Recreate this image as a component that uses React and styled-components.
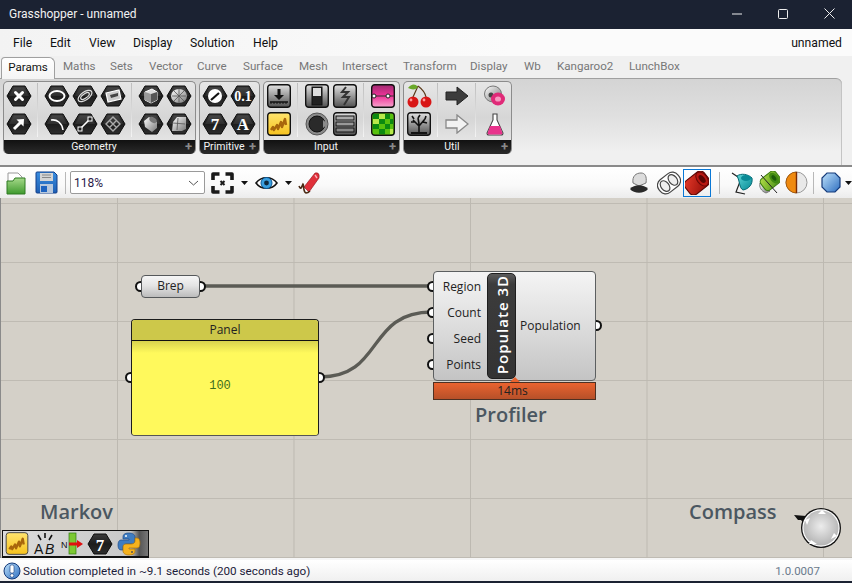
import React from 'react'
import styled, { createGlobalStyle } from 'styled-components'

const GlobalStyle = createGlobalStyle`
  html, body { margin: 0; padding: 0; background: #f0f0f0; }
  body { font-family: Roboto, "Open Sans", sans-serif; }
`

const Window = styled.div`
  width: 852px;
  height: 583px;
  display: flex;
  flex-direction: column;
  overflow: hidden;
  background: #f0f0f0;
  border-bottom: 2px solid #1b2232;
  box-sizing: border-box;
`

const TitleBar = styled.div`
  height: 29px;
  flex: none;
  display: flex;
  align-items: center;
  background: #1b2232;
  color: #f2f2f2;
  font-size: 12px;
  padding-left: 9px;
  padding-bottom: 1px;
  box-sizing: border-box;
`

const TitleText = styled.span`
  flex: 1;
`

const WinButton = styled.span`
  width: 46px;
  height: 20px;
  display: flex;
  align-items: center;
  justify-content: center;
  margin-bottom: 1px;
`

const MenuBar = styled.div`
  height: 27px;
  flex: none;
  display: flex;
  align-items: center;
  background: linear-gradient(90deg, #f3f3f3, #fbfbfb 60%);
  font-size: 12.2px;
  color: #111;
  padding: 0 10px 0 13px;
`

const MenuItem = styled.span`
  width: ${p => p.$w}px;
`

const DocName = styled.span`
  margin-left: auto;
`

const TabRow = styled.div`
  height: 22px;
  flex: none;
  display: flex;
  align-items: flex-end;
  padding-left: 1px;
  font-size: 11.6px;
  color: #777;
`

const ActiveTab = styled.div`
  width: 54px;
  height: 22px;
  margin-right: 8px;
  box-sizing: border-box;
  border: 1px solid #a0a0a0;
  border-bottom: none;
  border-radius: 4px 6px 0 0;
  background: linear-gradient(#fff, #f4f4f4);
  color: #111;
  text-align: center;
  line-height: 19px;
  position: relative;
  z-index: 1;
  margin-bottom: -1px;
`

const Tab = styled.span`
  width: ${p => p.$w}px;
  line-height: 23px;
  flex: none;
`

const RibbonStrip = styled.div`
  height: 87px;
  flex: none;
  margin-right: 10px;
  box-sizing: border-box;
  padding: 2px 0 0 3px;
  display: flex;
  align-items: flex-start;
  gap: 3px;
  border-top: 1px solid #a0a0a0;
  border-top-right-radius: 6px;
  box-shadow: inset -1px 0 0 #c4c4c4;
  background: linear-gradient(#d4d4d4, #e0e0e0 45%, #f0f0f0 85%);
`

const Group = styled.div`
  width: ${p => p.$w}px;
  height: 73px;
  box-sizing: border-box;
  border: 1px solid #8c8c8c;
  border-bottom: none;
  border-radius: 5px;
  display: flex;
  flex-direction: column;
  overflow: hidden;
  background: linear-gradient(#e6e6e6, #d6d6d6 50%, #ececec);
`

const GroupBody = styled.div`
  flex: 1;
  display: flex;
  padding: 0 0 0 1px;
`

const Column = styled.div`
  display: grid;
  grid-template-columns: repeat(${p => p.$n}, 28px);
  grid-auto-rows: 28px;
`

const Divider = styled.span`
  width: 1px;
  height: 54px;
  margin: 1px 5px 0 4px;
  background: linear-gradient(#bdbdbd, #f4f4f4);
`

const GroupFooter = styled.div`
  height: 14px;
  flex: none;
  position: relative;
  padding-right: 11px;
  background: linear-gradient(#111, #2b2b2b);
  color: #f4f4f4;
  font-size: 10.5px;
  line-height: 13px;
  text-align: center;
`

const Plus = styled.span`
  position: absolute;
  right: 3px;
  top: 0;
  color: #8a8a8a;
  font-weight: 700;
  font-size: 13px;
  line-height: 13px;
`

const Cell = styled.span`
  width: 28px;
  height: 28px;
  display: flex;
  align-items: center;
  justify-content: center;
`

const Toolbar = styled.div`
  height: 33px;
  flex: none;
  box-sizing: border-box;
  border-top: 2px solid #8a8a8a;
  display: flex;
  align-items: center;
  padding-left: 6px;
  background: linear-gradient(#fff, #f9f9f9 60%, #ececec);
`

const Slot = styled.span`
  display: flex;
  align-items: center;
  margin-left: ${p => p.$l || 0}px;
`

const PushRight = styled(Slot)`
  margin-left: auto;
`

const ToolSep = styled.span`
  width: 1px;
  height: 22px;
  margin-left: ${p => p.$l}px;
  background: #b8b8b8;
`

const Combo = styled.div`
  width: 135px;
  height: 23px;
  margin-left: 4px;
  box-sizing: border-box;
  border: 1px solid #9a9a9a;
  border-radius: 2px;
  background: #fff;
  display: flex;
  align-items: center;
  justify-content: space-between;
  padding: 0 5px 0 3px;
  font-size: 12px;
  color: #2a1a4a;
`

const SelectedTool = styled.span`
  width: 28px;
  height: 28px;
  margin-left: 2px;
  box-sizing: border-box;
  border: 1px solid #0a78d6;
  display: flex;
  align-items: center;
  justify-content: center;
`

const Canvas = styled.div`
  position: relative;
  z-index: 0;
  flex: 1;
  border-left: 1px solid #8a8a8a;
  background-color: #d4d0c8;
  background-image:
    linear-gradient(to right, #bdb9b1 1px, transparent 1px),
    linear-gradient(to bottom, #bfbbb3 1px, transparent 1px);
  background-size: 176.5px 100%, 100% 59px;
  background-position: 116px 0, 0 5px;
  font-family: "Open Sans", "Noto Sans", sans-serif;
`

const Wires = styled.svg`
  position: absolute;
  left: -1px;
  top: 0;
  z-index: -2;
`

const Node = styled.div`
  position: absolute;
  left: ${p => p.$x - 1}px;
  top: ${p => p.$y - 198}px;
  width: ${p => p.$w}px;
  height: ${p => p.$h}px;
  box-sizing: border-box;
`

const Grip = styled.span`
  position: absolute;
  z-index: -1;
  top: ${p => p.$y}px;
  ${p => (p.$out ? 'right: -7px;' : 'left: -7px;')}
  width: 11px;
  height: 11px;
  box-sizing: border-box;
  margin-top: -5.5px;
  border: 2.5px solid #111;
  border-radius: 50%;
  background: #fff;
`

const BrepBody = styled(Node)`
  border: 1px solid #55585a;
  border-radius: 4px;
  background: linear-gradient(#f6f6f6, #e4e4e4 45%, #bcbcbc);
  color: #222;
  font-size: 12px;
  line-height: 20px;
  text-align: center;
`

const PanelBody = styled(Node)`
  border: 1px solid #1c1c1c;
  border-radius: 4px;
  border-bottom-color: #555;
  background: #fff95c;
  display: flex;
  flex-direction: column;
  box-shadow: inset 0 0 0 1px #fffbb0;
`

const PanelHead = styled.div`
  height: 20px;
  flex: none;
  border-bottom: 1px solid #111;
  background: #cdc84a;
  color: #222;
  font-size: 12px;
  line-height: 19px;
  text-align: center;
  border-radius: 3px 3px 0 0;
`

const PanelText = styled.div`
  flex: 1;
  display: flex;
  align-items: center;
  justify-content: center;
  padding: 0 10px 4px 0;
  background: linear-gradient(#d8d34e, #fff95c 12px);
  color: #3e6d1c;
  font-family: "Liberation Mono", "DejaVu Sans Mono", monospace;
  font-size: 12px;
  border-radius: 0 0 3px 3px;
`

const CompBody = styled(Node)`
  border: 1px solid #5c5f60;
  border-radius: 4px;
  background: linear-gradient(#f4f4f4, #e2e2e2 40%, #c4c4c4);
  display: flex;
  color: #222;
  font-size: 12px;
`

const InputList = styled.div`
  width: 53px;
  flex: none;
  padding: 2px 6px 0 0;
  box-sizing: border-box;
`

const PortLabel = styled.div`
  height: 26px;
  line-height: 26px;
  text-align: right;
`

const Capsule = styled.div`
  width: 29px;
  height: 106px;
  flex: none;
  margin-top: 1px;
  box-sizing: border-box;
  border: 1px solid #1e1e1e;
  border-radius: 5px;
  background: linear-gradient(#5c5c5c, #3c3c3c 10px, #333);
  color: #fff;
  display: flex;
  align-items: center;
  justify-content: center;
`

const CapsuleText = styled.span`
  writing-mode: vertical-rl;
  transform: rotate(180deg);
  font-size: 15px;
  font-weight: 600;
  letter-spacing: 1px;
  white-space: nowrap;
  margin-bottom: 2px;
`

const OutputLabel = styled.div`
  flex: 1;
  padding: 0 0 0 4px;
  line-height: 108px;
`

const ProfileBar = styled(Node)`
  border: 1px solid #4e3022;
  background: linear-gradient(#ea632f, #b65029);
  color: #222;
  font-size: 12px;
  line-height: 16px;
  text-align: center;
  padding-right: 4px;
  &::before {
    content: '';
    position: absolute;
    left: 76px;
    top: -6px;
    border: 5px solid transparent;
    border-top: 0;
    border-bottom: 5px solid #e8622e;
  }
`

const CanvasLabel = styled.span`
  position: absolute;
  left: ${p => p.$x - 1}px;
  top: ${p => p.$y - 198}px;
  font-size: 20px;
  font-weight: 600;
  line-height: 24px;
  color: #4b5761;
  white-space: nowrap;
`

const Widget = styled.div`
  position: absolute;
  left: 1px;
  bottom: 0;
  width: 147px;
  height: 28px;
  box-sizing: border-box;
  border: 1px solid #111;
  border-bottom: 2px solid #111;
  display: flex;
  align-items: center;
  padding-left: 2px;
  gap: 4px;
  background: linear-gradient(90deg, #dcdcdc, #c8c8c8 88%, #555 94%, #777);
`

const CompassWrap = styled.svg`
  position: absolute;
  left: 786px;
  top: 302px;
`

const StatusBar = styled.div`
  height: 23px;
  flex: none;
  box-sizing: border-box;
  border-top: 2px solid #f6f6f6;
  display: flex;
  align-items: center;
  padding: 0 0 0 3px;
  gap: 2px;
  background: linear-gradient(#fff, #f0f0f0);
  font-size: 11.7px;
  color: #1c1c3a;
`

const Version = styled.span`
  margin-left: auto;
  margin-right: 32px;
  font-size: 11.5px;
  color: #6a7a8c;
`

const Defs = () => (
  <svg width='0' height='0' style={{ position: 'absolute' }}>
    <defs>
      <linearGradient id='hexFill' x1='0' y1='0' x2='0' y2='1'>
        <stop offset='0' stopColor='#3a3a3a' />
        <stop offset='0.5' stopColor='#1c1c1c' />
        <stop offset='1' stopColor='#2e2e2e' />
      </linearGradient>
      <linearGradient id='grayShade' x1='0' y1='0' x2='1' y2='1'>
        <stop offset='0' stopColor='#fff' />
        <stop offset='1' stopColor='#777' />
      </linearGradient>
      <linearGradient id='darkBtn' x1='0' y1='0' x2='0' y2='1'>
        <stop offset='0' stopColor='#e2e2e2' />
        <stop offset='1' stopColor='#505050' />
      </linearGradient>
      <linearGradient id='pink' x1='0' y1='0' x2='0' y2='1'>
        <stop offset='0' stopColor='#a02a70' />
        <stop offset='0.5' stopColor='#f0349a' />
        <stop offset='1' stopColor='#f6a4cc' />
      </linearGradient>
      <linearGradient id='bubble' x1='0' y1='0' x2='1' y2='1'>
        <stop offset='0' stopColor='#bfe2fb' />
        <stop offset='1' stopColor='#2e6ec0' />
      </linearGradient>
      <linearGradient id='folder' x1='0' y1='0' x2='0' y2='1'>
        <stop offset='0' stopColor='#a6d98a' />
        <stop offset='1' stopColor='#3f9a2e' />
      </linearGradient>
      <linearGradient id='disk' x1='0' y1='0' x2='0' y2='1'>
        <stop offset='0' stopColor='#3a8ee0' />
        <stop offset='1' stopColor='#1d5fb4' />
      </linearGradient>
      <radialGradient id='compass' cx='0.5' cy='0.45' r='0.55'>
        <stop offset='0' stopColor='#ececec' />
        <stop offset='1' stopColor='#b4b4b4' />
      </radialGradient>
      <linearGradient id='teal' x1='0' y1='0' x2='1' y2='1'>
        <stop offset='0' stopColor='#5fd6d6' />
        <stop offset='1' stopColor='#058a96' />
      </linearGradient>
      <linearGradient id='red' x1='0' y1='0' x2='1' y2='1'>
        <stop offset='0' stopColor='#e63a2a' />
        <stop offset='1' stopColor='#8c0804' />
      </linearGradient>
      <linearGradient id='green' x1='0' y1='0' x2='1' y2='1'>
        <stop offset='0' stopColor='#b6e04a' />
        <stop offset='1' stopColor='#3f8a10' />
      </linearGradient>
      <linearGradient id='amber' x1='0' y1='0' x2='0' y2='1'>
        <stop offset='0' stopColor='#ffe46e' />
        <stop offset='1' stopColor='#f6c21e' />
      </linearGradient>
    </defs>
  </svg>
)

const Hex = ({ children }) => (
  <svg width='28' height='28' viewBox='0 0 28 28'>
    <polygon points='2,14 8,4 20,4 26,14 20,24 8,24' fill='url(#hexFill)' stroke='#0c0c0c' strokeWidth='1' />
    <polygon points='4,14 9,5.5 19,5.5 24,14' fill='#fff' opacity='0.08' />
    {children}
  </svg>
)

const W = { fill: 'none', stroke: '#fff', strokeWidth: 2 }
const T = { fontFamily: '"Liberation Serif", serif', fontWeight: 700, fill: '#fff', textAnchor: 'middle' }

const SquareIcon = ({ children, fill = 'url(#darkBtn)' }) => (
  <svg width='24' height='24' viewBox='0 0 24 24'>
    <rect x='0.7' y='0.7' width='22.6' height='22.6' rx='3' fill={fill} stroke='#111' strokeWidth='1.4' />
    {children}
  </svg>
)

const Squiggle = () => (
  <path d='M4 18 l2 -3 1 3 3 -5 1 4 3 -7 1 5 3 -8 1 6' fill='none' stroke='#a8660c' strokeWidth='2.4' strokeLinejoin='round' />
)

const hexGeometry = [
  [<path key='a' d='M10.5 10.5 L17.5 17.5 M17.5 10.5 L10.5 17.5' stroke='#fff' strokeWidth='3' strokeLinecap='round' />,
   <g key='b'><path d='M9 19 L16 12' {...W} strokeWidth='3' /><polygon points='19,9 18.5,16.5 11.5,9.5' fill='#fff' /></g>],
  [<ellipse key='a' cx='14' cy='14' rx='7.5' ry='5' {...W} />,
   <path key='b' d='M8 10 C14 9 19 13 20 20' {...W} strokeWidth='1.6' />],
  [<g key='a'><ellipse cx='14' cy='14' rx='8' ry='4' transform='rotate(-35 14 14)' fill='none' stroke='#ddd' strokeWidth='1.2' /><ellipse cx='14' cy='14' rx='5' ry='2.2' transform='rotate(-35 14 14)' fill='none' stroke='#ddd' strokeWidth='1.2' /></g>,
   <g key='b'><path d='M9 19 L19 9' stroke='#fff' strokeWidth='1.6' /><rect x='7' y='17' width='4' height='4' fill='#222' stroke='#fff' /><rect x='17' y='7' width='4' height='4' fill='#222' stroke='#fff' /></g>],
  [<g key='a'><polygon points='7,11 20,8 22,17 9,20' fill='#ccc' stroke='#fff' strokeWidth='1.2' /><path d='M11 13 L19 11 L19 14 L12 16 Z' fill='#444' /></g>,
   <path key='b' d='M14 7 L21 14 L14 21 L7 14 Z M10 10 L18 18 M18 10 L10 18' fill='none' stroke='#aaa' strokeWidth='1.4' />],
  [<g key='a'><polygon points='8,10 15,7 20,10 20,18 14,21 8,18' fill='#ddd' stroke='#fff' /><polygon points='8,10 14,12 14,21 8,18' fill='#999' /><polygon points='14,12 20,10 20,18 14,21' fill='#555' /></g>,
   <g key='b'><ellipse cx='14' cy='14' rx='8' ry='7' fill='url(#grayShade)' /><path d='M9 9 L19 19 M19 9 L9 19 M14 7 V21 M7 14 H21' stroke='#555' strokeWidth='0.8' /></g>],
  [<g key='a'><polygon points='7,11 12,7 20,12 20,18 15,22 8,17' fill='url(#grayShade)' /><ellipse cx='16' cy='10' rx='4' ry='2.5' transform='rotate(30 16 10)' fill='#777' /></g>,
   <g key='b'><path d='M8 12 L12 7 H21 V19 L17 21 H7 Z' fill='url(#grayShade)' /><path d='M13 8 L12 20 M8 13 L20 14' stroke='#555' strokeWidth='0.8' /></g>]
]

const Geometry = () => (
  <>
    <Column $n={1}>
      <Cell><Hex>{hexGeometry[0][0]}</Hex></Cell>
      <Cell><Hex>{hexGeometry[0][1]}</Hex></Cell>
    </Column>
    <Divider />
    <Column $n={3}>
      <Cell><Hex>{hexGeometry[1][0]}</Hex></Cell>
      <Cell><Hex>{hexGeometry[2][0]}</Hex></Cell>
      <Cell><Hex>{hexGeometry[3][0]}</Hex></Cell>
      <Cell><Hex>{hexGeometry[1][1]}</Hex></Cell>
      <Cell><Hex>{hexGeometry[2][1]}</Hex></Cell>
      <Cell><Hex>{hexGeometry[3][1]}</Hex></Cell>
    </Column>
    <Divider />
    <Column $n={2}>
      <Cell><Hex>{hexGeometry[4][0]}</Hex></Cell>
      <Cell><Hex>{hexGeometry[4][1]}</Hex></Cell>
      <Cell><Hex>{hexGeometry[5][0]}</Hex></Cell>
      <Cell><Hex>{hexGeometry[5][1]}</Hex></Cell>
    </Column>
  </>
)

const Primitive = () => (
  <Column $n={2}>
    <Cell>
      <Hex>
        <circle cx='14' cy='14' r='7' fill='#fff' />
        <path d='M10 18 L18 11' stroke='#111' strokeWidth='2.2' />
      </Hex>
    </Cell>
    <Cell><Hex><text x='14' y='19' fontSize='14' {...T}>0.1</text></Hex></Cell>
    <Cell><Hex><text x='14' y='20' fontSize='17' {...T}>7</text></Hex></Cell>
    <Cell><Hex><text x='14' y='20' fontSize='17' {...T}>A</text></Hex></Cell>
  </Column>
)

const Input = () => (
  <>
    <Column $n={1}>
      <Cell>
        <SquareIcon>
          <path d='M12 5 V12' stroke='#111' strokeWidth='3' />
          <polygon points='7,11 17,11 12,16' fill='#111' />
          <path d='M3 18 H21' stroke='#111' strokeWidth='1.4' />
          <path d='M4 18v2M7 18v2M10 18v2M13 18v2M16 18v2M19 18v2' stroke='#111' />
        </SquareIcon>
      </Cell>
      <Cell><SquareIcon fill='url(#amber)'><Squiggle /></SquareIcon></Cell>
    </Column>
    <Divider />
    <Column $n={2}>
      <Cell>
        <SquareIcon>
          <rect x='7' y='3' width='10' height='18' fill='#222' stroke='#111' />
          <rect x='8' y='4' width='8' height='8' fill='#ddd' />
        </SquareIcon>
      </Cell>
      <Cell>
        <SquareIcon fill='url(#darkBtn)'>
          <path d='M13 3 L9 8 H15 L10 13 H16 L11 21' fill='none' stroke='#333' strokeWidth='2' />
        </SquareIcon>
      </Cell>
      <Cell>
        <svg width='24' height='24' viewBox='0 0 24 24'>
          <circle cx='12' cy='12' r='11' fill='#8c8c8c' stroke='#555' />
          <circle cx='12' cy='12' r='8' fill='#2a2a2a' stroke='#111' />
          <polygon points='18,8 23,12 18,16' fill='#8c8c8c' />
        </svg>
      </Cell>
      <Cell>
        <SquareIcon>
          <rect x='3' y='4' width='18' height='4' fill='#aaa' stroke='#111' />
          <rect x='3' y='10' width='18' height='4' fill='#999' stroke='#111' />
          <rect x='3' y='16' width='18' height='4' fill='#888' stroke='#111' />
        </SquareIcon>
      </Cell>
    </Column>
    <Divider />
    <Column $n={1}>
      <Cell>
        <SquareIcon fill='url(#pink)'>
          <path d='M1 12 H23' stroke='#333' />
          <circle cx='3' cy='12' r='2' fill='#fff' stroke='#222' />
          <circle cx='17' cy='12' r='2' fill='#fff' stroke='#222' />
        </SquareIcon>
      </Cell>
      <Cell>
        <SquareIcon fill='#58c00e'>
          <path d='M2 2h6v5h-6zM14 2h5v5h-5zM8 7h6v5h-6zM19 7h3v5h-3zM2 12h6v5h-6zM14 12h5v5h-5zM8 17h6v5h-6z' fill='#0c8a10' />
          <path d='M8 2h6v5h-6zM2 7h6v5h-6zM19 17h3v5h-3z' fill='#b8e84a' />
        </SquareIcon>
      </Cell>
    </Column>
  </>
)

const Util = () => (
  <>
    <Column $n={1}>
      <Cell>
        <svg width='28' height='28' viewBox='0 0 28 28'>
          <path d='M13 4 L8 15 M13 4 C17 7 20 10 21 15' fill='none' stroke='#5a3a1a' strokeWidth='1.2' />
          <path d='M13 5 C10 1 6 2 3 6 C7 8 11 8 13 5 Z' fill='#6aa82a' />
          <circle cx='8' cy='20' r='5.5' fill='#d81616' />
          <circle cx='21' cy='20' r='5.5' fill='#d81616' />
          <circle cx='6' cy='18' r='1.4' fill='#ff9a9a' />
          <circle cx='19' cy='18' r='1.4' fill='#ff9a9a' />
        </svg>
      </Cell>
      <Cell>
        <SquareIcon fill='url(#darkBtn)'>
          <path d='M12 21 V12 M12 14 L6 8 M12 14 L18 7 M12 12 L11 6 M8 10 L4 10 M16 10 L20 11 M7 7 L5 4 M18 7 L19 4 M11 6 L13 3' stroke='#111' strokeWidth='1.6' fill='none' />
          <path d='M4 21 H20' stroke='#111' strokeWidth='2' />
        </SquareIcon>
      </Cell>
    </Column>
    <Divider />
    <Column $n={1}>
      <Cell>
        <svg width='24' height='20' viewBox='0 0 24 20'>
          <polygon points='1,6 12,6 12,1 23,10 12,19 12,14 1,14' fill='#3c3c3c' stroke='#222' />
        </svg>
      </Cell>
      <Cell>
        <svg width='24' height='20' viewBox='0 0 24 20'>
          <polygon points='1,6 12,6 12,1 23,10 12,19 12,14 1,14' fill='#f2f2f2' stroke='#888' strokeWidth='1.3' />
        </svg>
      </Cell>
    </Column>
    <Divider />
    <Column $n={1}>
      <Cell>
        <svg width='24' height='24' viewBox='0 0 24 24'>
          <ellipse cx='10' cy='10' rx='8.5' ry='8' fill='url(#grayShade)' stroke='#777' />
          <circle cx='8' cy='11' r='2.5' fill='#444' />
          <ellipse cx='15' cy='15' rx='7' ry='6.5' fill='#e02a78' />
          <ellipse cx='15' cy='15' rx='3' ry='2.6' fill='#f69ac0' />
        </svg>
      </Cell>
      <Cell>
        <svg width='20' height='24' viewBox='0 0 20 24'>
          <path d='M8 2 H12 V8 L18 21 Q18 23 16 23 H4 Q2 23 2 21 L8 8 Z' fill='#fff' stroke='#444' strokeWidth='1.1' />
          <path d='M5 14 H15 L17.5 21.5 Q17 22.5 16 22.5 H4 Q3 22.5 2.5 21.5 Z' fill='#e8338c' />
        </svg>
      </Cell>
    </Column>
  </>
)

const Caret = () => (
  <svg width='7' height='4' viewBox='0 0 7 4'><polygon points='0,0 7,0 3.5,4' fill='#111' /></svg>
)

const LeftTools = () => (
  <>
    <Slot>
      <svg width='20' height='24' viewBox='0 0 20 24'>
        <path d='M2 2 H12 L16 6 V12 H2 Z' fill='#fff' stroke='#999' />
        <path d='M1 10 H7 L9 7 H19 V23 H1 Z' fill='url(#folder)' stroke='#2f7a22' />
      </svg>
    </Slot>
    <Slot $l={9}>
      <svg width='23' height='23' viewBox='0 0 23 23'>
        <path d='M2 1 H19 L22 4 V21 Q22 22 21 22 H2 Q1 22 1 21 V2 Q1 1 2 1 Z' fill='url(#disk)' stroke='#123f8a' />
        <rect x='5' y='2' width='13' height='8' fill='#d4d4d4' />
        <path d='M7 4 H16 M7 6.5 H16' stroke='#888' />
        <rect x='5' y='13' width='13' height='9' fill='#b8c8dc' />
        <rect x='6' y='15' width='6' height='6' fill='#1d63c0' />
      </svg>
    </Slot>
    <ToolSep $l={7} />
    <Combo>
      118%
      <svg width='11' height='6' viewBox='0 0 11 6'><path d='M1 1 L5.5 5 L10 1' fill='none' stroke='#555' /></svg>
    </Combo>
    <Slot $l={6}>
      <svg width='23' height='22' viewBox='0 0 23 22'>
        <path d='M2 8 V2 H8.5 M14.5 2 H21 V8 M21 14 V20 H14.5 M8.5 20 H2 V14' fill='none' stroke='#1a1a1a' strokeWidth='3.6' strokeLinejoin='round' />
        <path d='M9.5 9 L13.5 13 M13.5 9 L9.5 13' stroke='#1a1a1a' strokeWidth='2' />
      </svg>
    </Slot>
    <Slot $l={7}><Caret /></Slot>
    <Slot $l={7}>
      <svg width='23' height='16' viewBox='0 0 23 16'>
        <path d='M1 8 C6 1 17 1 22 8 C17 15 6 15 1 8 Z' fill='#fff' stroke='#111' strokeWidth='1.6' />
        <circle cx='11.5' cy='8' r='5.5' fill='#3aa0e0' stroke='#0c5a98' />
        <circle cx='11.5' cy='8' r='2.4' fill='#10283c' />
      </svg>
    </Slot>
    <Slot $l={7}><Caret /></Slot>
    <Slot $l={6}>
      <svg width='22' height='24' viewBox='0 0 22 24'>
        <path d='M6 16 L17 2 Q22 1 21 7 L11 21 Z' fill='#e0303a' stroke='#8a1018' strokeWidth='0.6' />
        <path d='M17 4 L19 7' stroke='#f6b0b8' strokeWidth='1.4' />
        <path d='M1 15 C3 20 4 15 5 13 C6 14 5 21 8 22 C10 22 11 21 12 20' fill='none' stroke='#4a2a14' strokeWidth='1.6' />
      </svg>
    </Slot>
  </>
)

const RightTools = () => (
  <>
    <PushRight>
      <svg width='20' height='24' viewBox='0 0 20 24'>
        <path d='M4 12 C3 5 7 2 12 2 C16 2 18 5 17 12 L10 15 Z' fill='#dcdcdc' stroke='#777' />
        <path d='M1 18 C5 13 15 13 19 18 C15 23 5 23 1 18 Z' fill='#2a2a2a' />
      </svg>
    </PushRight>
    <Slot $l={8}>
      <svg width='24' height='24' viewBox='0 0 24 24'>
        <g transform='rotate(-38 12 12)' fill='#fff' stroke='#444' strokeWidth='1.2'>
          <rect x='0' y='4' width='24' height='16' rx='7' />
          <ellipse cx='7' cy='12' rx='4' ry='6' fill='#eee' />
          <ellipse cx='17' cy='12' rx='4' ry='6' fill='#eee' />
        </g>
      </svg>
    </Slot>
    <SelectedTool>
      <svg width='24' height='24' viewBox='0 0 24 24'>
        <g transform='rotate(-38 12 12)'>
          <rect x='0' y='3.5' width='24' height='17' rx='5' fill='url(#red)' stroke='#5a0604' />
          <ellipse cx='18.5' cy='12' rx='5' ry='8' fill='#b81812' stroke='#6a0806' />
          <ellipse cx='18.5' cy='12' rx='2.6' ry='4.6' fill='#5a0604' />
        </g>
      </svg>
    </SelectedTool>
    <ToolSep $l={8} />
    <Slot $l={11}>
      <svg width='22' height='24' viewBox='0 0 22 24'>
        <path d='M1 2 L10 8 L5 21 L14 23' fill='none' stroke='#222' strokeWidth='1.2' />
        <path d='M6 5 C10 2 17 3 21 7 C22 13 18 18 12 19 C8 17 9 10 6 5 Z' fill='url(#teal)' stroke='#066a74' />
        <ellipse cx='15' cy='7' rx='5' ry='3' fill='#0a8a96' />
      </svg>
    </Slot>
    <Slot $l={5}>
      <svg width='22' height='24' viewBox='0 0 22 24'>
        <path d='M2 12 L12 20 L8 22 C3 20 1 16 2 12 Z' fill='url(#grayShade)' stroke='#777' />
        <g transform='rotate(-38 12 10)'>
          <rect x='3' y='3' width='19' height='14' rx='4' fill='url(#green)' stroke='#3a7a10' />
          <ellipse cx='17' cy='10' rx='3.8' ry='6' fill='#3f8a10' />
          <ellipse cx='17' cy='10' rx='1.8' ry='3.2' fill='#1c5a08' />
        </g>
        <path d='M3 4 L19 22' stroke='#222' />
      </svg>
    </Slot>
    <Slot $l={5}>
      <svg width='23' height='23' viewBox='0 0 23 23'>
        <circle cx='11.5' cy='11.5' r='10.5' fill='#e9e9e9' stroke='#999' />
        <path d='M11.5 1 A10.5 10.5 0 0 0 11.5 22 Z' fill='#ef8a10' stroke='#a85a08' />
        <path d='M11.5 1 V22' stroke='#7a2a04' strokeWidth='1.4' />
      </svg>
    </Slot>
    <ToolSep $l={5} />
    <Slot $l={7}>
      <svg width='20' height='21' viewBox='0 0 20 21'>
        <polygon points='6,1 14,1 19,6 19,15 14,20 6,20 1,15 1,6' fill='url(#bubble)' stroke='#153a7a' strokeWidth='1.2' />
      </svg>
    </Slot>
    <Slot $l={4}><Caret /></Slot>
  </>
)

const CompassIcon = () => (
  <CompassWrap width='60' height='50' viewBox='0 0 60 50'>
    <polygon points='7,15 19,16 19,26 14,20 11,20' fill='#111' />
    <circle cx='34' cy='28' r='20' fill='#111' />
    <circle cx='34' cy='28' r='18.7' fill='#fff' />
    <circle cx='34' cy='28' r='17.5' fill='url(#compass)' />
    <polygon points='35,10 31,14 39,14' fill='#fff' />
    <polygon points='18,20 23,18 20,25' fill='#fff' />
    <polygon points='50,36 44,39 47,33' fill='#fff' />
    <polygon points='24,40 30,44 22,44' fill='#fff' />
  </CompassWrap>
)

const WidgetIcons = () => (
  <>
    <svg width='24' height='23' viewBox='0 0 24 24'>
      <rect x='0.7' y='0.7' width='22.6' height='22.6' rx='3' fill='url(#amber)' stroke='#444' />
      <Squiggle />
    </svg>
    <svg width='24' height='24' viewBox='0 0 24 24'>
      <text x='1' y='22' fontSize='14' fontFamily='"Liberation Sans", sans-serif' fill='#111'>A</text>
      <text x='12' y='22' fontSize='14' fontStyle='italic' fontFamily='"Liberation Sans", sans-serif' fill='#111'>B</text>
      <path d='M5 3 L8 8 M12 1 L12 6 M19 3 L16 8' stroke='#111' strokeWidth='1.6' />
    </svg>
    <svg width='22' height='24' viewBox='0 0 22 24'>
      <text x='0' y='16' fontSize='9' fontFamily='"Liberation Sans", sans-serif' fill='#111'>N</text>
      <rect x='8' y='1' width='7' height='21' fill='#7cc832' stroke='#2e7a10' strokeWidth='0.7' />
      <path d='M8 12 H18' stroke='#e01010' strokeWidth='3' />
      <polygon points='16,8 22,12 16,16' fill='#e01010' />
    </svg>
    <svg width='26' height='24' viewBox='1 2 26 24'>
      <polygon points='2,14 8,4 20,4 26,14 20,24 8,24' fill='url(#hexFill)' stroke='#0c0c0c' />
      <text x='14' y='20.5' fontSize='17' {...T}>7</text>
    </svg>
    <svg width='24' height='24' viewBox='0 0 24 24'>
      <path d='M12 1 C7 1 6 3 6 5 V7 H12 V8 H4 C2 8 1 10 1 13 C1 16 2 18 4 18 H6 V15 C6 13 8 12 10 12 H15 C17 12 18 11 18 9 V5 C18 3 16 1 12 1 Z' fill='#3f7cc0' stroke='#1c4a8a' strokeWidth='0.7' />
      <path d='M12 23 C17 23 18 21 18 19 V17 H12 V16 H20 C22 16 23 14 23 11 C23 8 22 6 20 6 H18 V9 C18 11 16 12 14 12 H9 C7 12 6 13 6 15 V19 C6 21 8 23 12 23 Z' fill='#f6b21e' stroke='#a8700c' strokeWidth='0.7' />
      <circle cx='9' cy='4' r='1' fill='#fff' />
      <circle cx='15' cy='20' r='1' fill='#555' />
    </svg>
  </>
)

const menus = [['File', 37], ['Edit', 39], ['View', 44], ['Display', 57], ['Solution', 63], ['Help', 40]]
const tabs = [
  ['Maths', 47], ['Sets', 39], ['Vector', 48], ['Curve', 46], ['Surface', 56], ['Mesh', 43],
  ['Intersect', 61], ['Transform', 67], ['Display', 54], ['Wb', 33], ['Kangaroo2', 72], ['LunchBox', 70]
]
const inputs = ['Region', 'Count', 'Seed', 'Points']

const App = () => {
  return <Window>
    <GlobalStyle />
    <Defs />
    <TitleBar>
      <TitleText>Grasshopper - unnamed</TitleText>
      <WinButton><svg width='10' height='2' viewBox='0 0 10 2'><path d='M0 1 H10' stroke='#eee' /></svg></WinButton>
      <WinButton><svg width='10' height='10' viewBox='0 0 10 10'><rect x='0.5' y='0.5' width='9' height='9' rx='1' fill='none' stroke='#eee' /></svg></WinButton>
      <WinButton><svg width='11' height='11' viewBox='0 0 11 11'><path d='M0.5 0.5 L10.5 10.5 M10.5 0.5 L0.5 10.5' stroke='#eee' /></svg></WinButton>
    </TitleBar>
    <MenuBar>
      {menus.map(([name, w]) => <MenuItem key={name} $w={w}>{name}</MenuItem>)}
      <DocName>unnamed</DocName>
    </MenuBar>
    <TabRow>
      <ActiveTab>Params</ActiveTab>
      {tabs.map(([name, w]) => <Tab key={name} $w={w}>{name}</Tab>)}
    </TabRow>
    <RibbonStrip>
      <Group $w={193}>
        <GroupBody><Geometry /></GroupBody>
        <GroupFooter>Geometry<Plus>+</Plus></GroupFooter>
      </Group>
      <Group $w={61}>
        <GroupBody><Primitive /></GroupBody>
        <GroupFooter>Primitive<Plus>+</Plus></GroupFooter>
      </Group>
      <Group $w={137}>
        <GroupBody><Input /></GroupBody>
        <GroupFooter>Input<Plus>+</Plus></GroupFooter>
      </Group>
      <Group $w={109}>
        <GroupBody><Util /></GroupBody>
        <GroupFooter>Util<Plus>+</Plus></GroupFooter>
      </Group>
    </RibbonStrip>
    <Toolbar>
      <LeftTools />
      <RightTools />
    </Toolbar>
    <Canvas>
      <Wires width='852' height='360' viewBox='0 198 852 360'>
        <path d='M202 286 H432' fill='none' stroke='#5b5b55' strokeWidth='3.4' />
        <path d='M320 377 C384 377 366 312 432 312' fill='none' stroke='#5b5b55' strokeWidth='3.4' />
      </Wires>
      <BrepBody $x={141} $y={275} $w={59} $h={23}>
        Brep
        <Grip $y={10} />
        <Grip $y={10} $out />
      </BrepBody>
      <PanelBody $x={131} $y={319} $w={188} $h={117}>
        <PanelHead>Panel</PanelHead>
        <PanelText>100</PanelText>
        <Grip $y={57} />
        <Grip $y={57} $out />
      </PanelBody>
      <CompBody $x={433} $y={271} $w={163} $h={110}>
        <InputList>
          {inputs.map(name => <PortLabel key={name}>{name}</PortLabel>)}
        </InputList>
        <Capsule><CapsuleText>Populate 3D</CapsuleText></Capsule>
        <OutputLabel>Population</OutputLabel>
        {inputs.map((name, i) => <Grip key={name} $y={14 + i * 26} />)}
        <Grip $y={53} $out />
      </CompBody>
      <ProfileBar $x={433} $y={382} $w={163} $h={18}>14ms</ProfileBar>
      <CanvasLabel $x={475} $y={403}>Profiler</CanvasLabel>
      <CanvasLabel $x={40} $y={500}>Markov</CanvasLabel>
      <CanvasLabel $x={689} $y={500}>Compass</CanvasLabel>
      <CompassIcon />
      <Widget><WidgetIcons /></Widget>
    </Canvas>
    <StatusBar>
      <svg width='18' height='18' viewBox='0 0 18 18'>
        <circle cx='9' cy='9' r='8' fill='url(#bubble)' stroke='#153a7a' />
        <rect x='7' y='3' width='4' height='8' rx='1.5' fill='#fff' stroke='#153a7a' strokeWidth='0.6' />
        <circle cx='9' cy='13.5' r='1.8' fill='#fff' stroke='#153a7a' strokeWidth='0.6' />
      </svg>
      Solution completed in ~9.1 seconds (200 seconds ago)
      <Version>1.0.0007</Version>
    </StatusBar>
  </Window>
}

export default App
